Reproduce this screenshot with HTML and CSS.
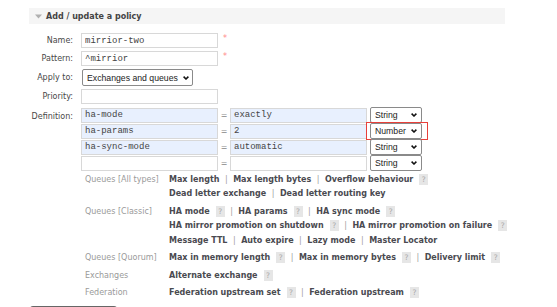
FILE: index.html
```html
<!DOCTYPE html>
<html lang="en-US">
<head>
    <meta charset="UTF-8">
    <meta name="viewport" content="width=device-width, initial-scale=1.0">
    <title>RabbitMQ Management | Policies</title>
    <link rel="stylesheet" href="styles.css">
</head>
<body>

    <div class="section">
        <h2 class="section-title">
            <svg class="toggle" width="7" height="5" viewBox="0 0 7 5"><path d="M0 0.5h7L3.5 4.5z" fill="#b0b0b0"/></svg>
            Add / update a policy
        </h2>

        <form class="policy-form">
            <label class="field-label">Name:</label>
            <div class="field">
                <input type="text" class="text-input" value="mirrior-two">
                <span class="mand">*</span>
            </div>

            <label class="field-label">Pattern:</label>
            <div class="field">
                <input type="text" class="text-input" value="^mirrior">
                <span class="mand">*</span>
            </div>

            <label class="field-label">Apply to:</label>
            <div class="field">
                <span class="select-wrap apply">
                    <select class="apply-select">
                        <option>Exchanges and queues</option>
                        <option>Exchanges</option>
                        <option>Queues</option>
                    </select>
                    <svg class="chevron" width="6" height="4" viewBox="0 0 6 4"><path d="M0.6 0.6L3 3L5.4 0.6" fill="none" stroke="#111" stroke-width="1.5"/></svg>
                </span>
            </div>

            <label class="field-label">Priority:</label>
            <div class="field">
                <input type="text" class="text-input" value="">
            </div>

            <label class="field-label top">Definition:</label>
            <div class="definition">
                <div class="multifield">
                    <div class="mf-row">
                        <input type="text" class="text-input filled" value="ha-mode">
                        <span class="eq">=</span>
                        <input type="text" class="text-input filled" value="exactly">
                        <span class="select-wrap type">
                            <select class="type-select"><option>String</option><option>Number</option><option>Boolean</option><option>List</option></select>
                            <svg class="chevron" width="6" height="4" viewBox="0 0 6 4"><path d="M0.6 0.6L3 3L5.4 0.6" fill="none" stroke="#111" stroke-width="1.5"/></svg>
                        </span>
                    </div>
                    <div class="mf-row">
                        <input type="text" class="text-input filled" value="ha-params">
                        <span class="eq">=</span>
                        <input type="text" class="text-input filled" value="2">
                        <span class="select-wrap type flagged">
                            <select class="type-select"><option>String</option><option selected>Number</option><option>Boolean</option><option>List</option></select>
                            <svg class="chevron" width="6" height="4" viewBox="0 0 6 4"><path d="M0.6 0.6L3 3L5.4 0.6" fill="none" stroke="#111" stroke-width="1.5"/></svg>
                        </span>
                    </div>
                    <div class="mf-row">
                        <input type="text" class="text-input filled" value="ha-sync-mode">
                        <span class="eq">=</span>
                        <input type="text" class="text-input filled" value="automatic">
                        <span class="select-wrap type">
                            <select class="type-select"><option>String</option><option>Number</option><option>Boolean</option><option>List</option></select>
                            <svg class="chevron" width="6" height="4" viewBox="0 0 6 4"><path d="M0.6 0.6L3 3L5.4 0.6" fill="none" stroke="#111" stroke-width="1.5"/></svg>
                        </span>
                    </div>
                    <div class="mf-row">
                        <input type="text" class="text-input" value="">
                        <span class="eq">=</span>
                        <input type="text" class="text-input" value="">
                        <span class="select-wrap type">
                            <select class="type-select"><option>String</option><option>Number</option><option>Boolean</option><option>List</option></select>
                            <svg class="chevron" width="6" height="4" viewBox="0 0 6 4"><path d="M0.6 0.6L3 3L5.4 0.6" fill="none" stroke="#111" stroke-width="1.5"/></svg>
                        </span>
                    </div>
                </div>

                <div class="argument-links">
                    <div class="arg-group">
                        <span class="arg-type">Queues [All types]</span>
                        <div class="arg-lines">
                            <div><span class="arg-link">Max length</span><span class="sep">|</span><span class="arg-link">Max length bytes</span><span class="sep">|</span><span class="arg-link">Overflow behaviour</span><span class="help">?</span></div>
                            <div><span class="arg-link">Dead letter exchange</span><span class="sep">|</span><span class="arg-link">Dead letter routing key</span></div>
                        </div>
                    </div>
                    <div class="arg-group">
                        <span class="arg-type">Queues [Classic]</span>
                        <div class="arg-lines">
                            <div><span class="arg-link">HA mode</span><span class="help">?</span><span class="sep">|</span><span class="arg-link">HA params</span><span class="help">?</span><span class="sep">|</span><span class="arg-link">HA sync mode</span><span class="help">?</span></div>
                            <div><span class="arg-link">HA mirror promotion on shutdown</span><span class="help">?</span><span class="sep">|</span><span class="arg-link">HA mirror promotion on failure</span><span class="help">?</span></div>
                            <div><span class="arg-link">Message TTL</span><span class="sep">|</span><span class="arg-link">Auto expire</span><span class="sep">|</span><span class="arg-link">Lazy mode</span><span class="sep">|</span><span class="arg-link">Master Locator</span></div>
                        </div>
                    </div>
                    <div class="arg-group">
                        <span class="arg-type">Queues [Quorum]</span>
                        <div class="arg-lines">
                            <div><span class="arg-link">Max in memory length</span><span class="help">?</span><span class="sep">|</span><span class="arg-link">Max in memory bytes</span><span class="help">?</span><span class="sep">|</span><span class="arg-link">Delivery limit</span><span class="help">?</span></div>
                        </div>
                    </div>
                    <div class="arg-group">
                        <span class="arg-type">Exchanges</span>
                        <div class="arg-lines">
                            <div><span class="arg-link">Alternate exchange</span><span class="help">?</span></div>
                        </div>
                    </div>
                    <div class="arg-group">
                        <span class="arg-type">Federation</span>
                        <div class="arg-lines">
                            <div><span class="arg-link">Federation upstream set</span><span class="help">?</span><span class="sep">|</span><span class="arg-link">Federation upstream</span><span class="help">?</span></div>
                        </div>
                    </div>
                </div>
            </div>
        </form>

        <button type="button" class="btn">Add / update policy</button>
    </div>

</body>
</html>
```

FILE: styles.css
```css
    /* page basics */
    body {
        margin: 0;
        background: #ffffff;
        color: #484848;
        font-family: "DejaVu Sans", Verdana, sans-serif;
        font-size: 8px;
    }
    .section {
        width: 476px;
        margin: 8px 0 0 29px;
    }
    .section-title {
        display: flex;
        align-items: center;
        gap: 4px;
        height: 16px;
        margin: 0;
        padding-left: 6px;
        background: #f5f5f5;
        font-size: 8px;
        font-weight: bold;
        color: #444444;
    }

    /* the form: labels on the left, fields on the right */
    .policy-form {
        display: grid;
        grid-template-columns: 44px auto;
        column-gap: 8px;
        row-gap: 3px;
        margin-top: 9px;
        align-items: center;
    }
    .field-label {
        text-align: right;
        white-space: nowrap;
    }
    .field-label.top {
        align-self: start;
        padding-top: 2px;
        line-height: 16px;
    }
    .field {
        display: flex;
        align-items: center;
    }
    .text-input {
        box-sizing: border-box;
        width: 137px;
        height: 15px;
        margin: 0;
        padding: 0 3px;
        border: 1px solid #d8d8d8;
        background: #ffffff;
        color: #444444;
        font-family: "Liberation Mono", "Courier New", monospace;
        font-size: 9px;
        outline: none;
    }
    .text-input.filled {
        background: #e8f0fe;
    }
    .mand {
        align-self: flex-start;
        margin-left: 5px;
        color: #ff8888;
        font-size: 8px;
        line-height: 8px;
        margin-top: 2px;
    }

    /* selects: plain box, chevron drawn on top */
    .select-wrap {
        position: relative;
        display: inline-flex;
    }
    select {
        box-sizing: border-box;
        appearance: none;
        -webkit-appearance: none;
        height: 16px;
        margin: 0;
        padding: 0 10px 0 4px;
        border: 1px solid #8a8a8a;
        border-radius: 2px;
        background: #ffffff;
        color: #222222;
        font-family: "Liberation Sans", Arial, sans-serif;
        font-size: 8.7px;
    }
    .chevron {
        position: absolute;
        top: 6px;
        right: 5px;
        pointer-events: none;
    }
    .select-wrap.apply {
        margin-left: 1px;
    }
    .select-wrap.apply .chevron {
        top: 7px;
        right: 4px;
    }
    .apply-select {
        width: 111px;
        height: 17px;
    }
    .select-wrap.type {
        margin-left: 3px;
    }
    .type-select {
        width: 52px;
    }
    /* red highlight drawn over the Number select */
    .select-wrap.flagged::after {
        content: "";
        position: absolute;
        top: -1px;
        bottom: -1px;
        left: -4px;
        right: -6px;
        border: 1.5px solid #e8403a;
    }

    /* definition key / value rows */
    .definition {
        display: flex;
        flex-direction: column;
    }
    .multifield {
        display: flex;
        flex-direction: column;
    }
    .mf-row {
        display: flex;
        align-items: center;
        height: 16px;
    }
    .eq {
        width: 12px;
        text-align: center;
        color: #888888;
    }

    /* argument shortcut links */
    .argument-links {
        display: flex;
        flex-direction: column;
        margin: 0 0 0 4px;
    }
    .arg-group {
        display: grid;
        grid-template-columns: 84px auto;
        padding: 1.5px 0;
        line-height: 14.5px;
    }
    .arg-type {
        color: #9a9a9a;
        white-space: nowrap;
    }
    .arg-lines div {
        white-space: nowrap;
    }
    .arg-link {
        font-weight: bold;
        color: #4a4a50;
    }
    .sep {
        margin: 0 5.5px;
        color: #a0a0a0;
    }
    .help {
        display: inline-block;
        width: 9px;
        height: 11px;
        margin-left: 6px;
        background: #e6e6e6;
        color: #aaaaaa;
        font-size: 7.5px;
        line-height: 11px;
        text-align: center;
        vertical-align: middle;
    }

    .btn {
        display: block;
        width: 87px;
        height: 24px;
        margin: 4px 0 0 1px;
        padding: 12px 0 0;
        border: none;
        border-radius: 3px;
        background: #666666;
        color: #ffffff;
        font-family: "DejaVu Sans", Verdana, sans-serif;
        font-size: 8px;
    }
```
